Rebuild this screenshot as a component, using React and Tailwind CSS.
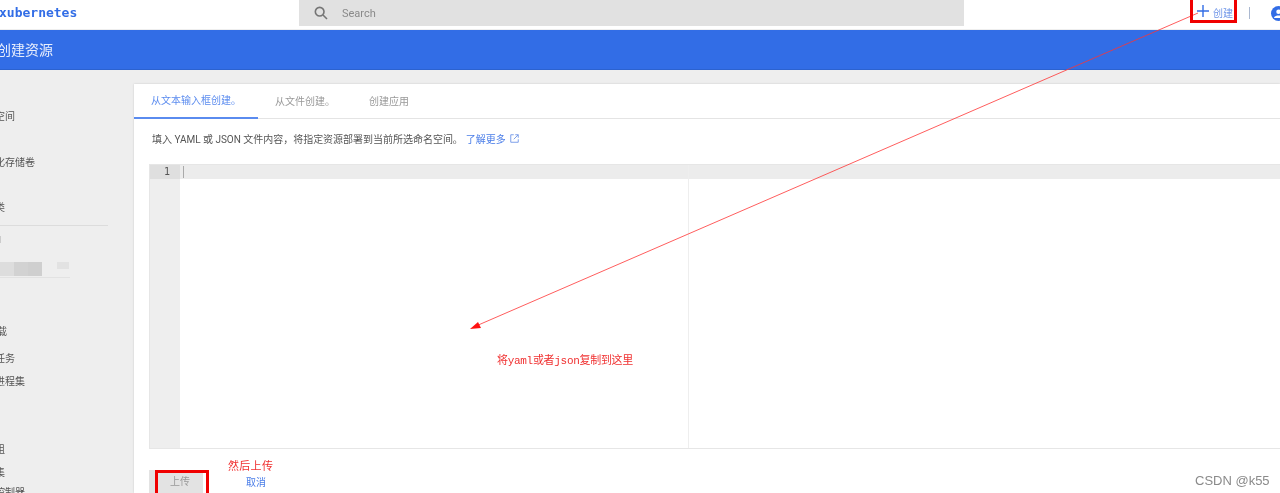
import React from 'react';

const cjk = "font-['Roboto','Noto_Sans_CJK_SC',sans-serif]";

const sideItems = [
    { text: '空间', h: 'h-[46px]', ml: '-ml-[5px]' },
    { text: '化存储卷', h: 'h-[45px]', ml: '-ml-[5px]' },
    { text: '类', h: 'h-[24px]', ml: '-ml-[5px]' },
];

const lowerItems = [
    { text: '载', h: 'h-[27px]', ml: '-ml-[3px]' },
    { text: '任务', h: 'h-[23px]', ml: '-ml-[5px]' },
    { text: '进程集', h: 'h-[68px]', ml: '-ml-[5px]' },
    { text: '组', h: 'h-[23px]', ml: '-ml-[5px]' },
    { text: '集', h: 'h-[20px]', ml: '-ml-[5px]' },
    { text: '控制器', h: 'h-[20px]', ml: '-ml-[5px]' },
];

const SideRow = ({ item }) => (
    <div className={`${item.h} flex items-start`}>
        <span className={`${item.ml} text-[10px] leading-[14px] text-[#555] whitespace-nowrap`}>{item.text}</span>
    </div>
);

const Annotations = () => (
    <svg className="absolute left-0 top-0 pointer-events-none" width="1280" height="493">
        <line x1="1198" y1="13" x2="476" y2="326" stroke="#f33" strokeWidth="0.8" />
        <polygon points="470,329 478,322 481,328" fill="#f11" />
    </svg>
);

export default function App() {
    return (
        <div className={`relative h-[493px] w-[1280px] overflow-hidden flex flex-col bg-[#eeeeee] blur-[0.35px] ${cjk}`}>
            <div className="h-[29px] bg-white flex items-start shrink-0">
                <div className="w-[299px] h-[26px] flex items-center overflow-hidden">
                    <span className="-ml-[1px] text-[13px] font-bold text-[#326de6] font-['DejaVu_Sans_Mono',monospace]">xubernetes</span>
                </div>
                <div className="w-[665px] h-[26px] bg-[#e1e1e1] flex items-center pl-[14px]">
                    <svg width="16" height="16" viewBox="0 0 24 24" fill="none" stroke="#757575" strokeWidth="2.4">
                        <circle cx="10" cy="10" r="6.5" />
                        <path d="M15 15l6 6" />
                    </svg>
                    <span className="ml-[13px] mt-[2px] text-[11px] text-[#8a8a8a]">Search</span>
                </div>
                <div className="flex-1 h-[26px] flex items-center justify-end">
                    <svg width="12" height="12" viewBox="0 0 12 12" className="-mt-[5px]" stroke="#326de6" strokeWidth="1.4">
                        <path d="M6 0v12M0 6h12" />
                    </svg>
                    <span className="ml-[4px] text-[10px] text-[#6f95e8]">创建</span>
                    <div className="ml-[16px] w-px h-[12px] bg-[#aab8d0]" />
                    <svg width="15" height="15" viewBox="0 0 24 24" className="ml-[21px] -mr-[6px] shrink-0">
                        <circle cx="12" cy="12" r="12" fill="#326de6" />
                        <circle cx="12" cy="9" r="3.6" fill="#fff" />
                        <path d="M5 18c2-4 12-4 14 0v1H5z" fill="#fff" />
                    </svg>
                </div>
            </div>
            <div className="h-[40px] mt-px bg-[#326de6] border-b border-[#2c62cf] flex items-center shrink-0 overflow-hidden">
                <span className="-ml-[3px] mt-[2px] text-[14px] text-[#e8eefc]">创建资源</span>
            </div>

            <div className="flex-1 flex min-h-0">
                <div className="w-[134px] shrink-0 pt-[40px] overflow-hidden">
                    {sideItems.map(item => <SideRow key={item.text} item={item} />)}
                    <div className="w-[108px] h-px bg-[#dcdcdc]" />
                    <div className="h-[13px] pt-[10px]">
                        <div className="w-px h-[7px] bg-[#ccc]" />
                    </div>
                    <div className="h-[86px] pt-[23px]">
                        <div className="flex gap-[15px] items-start">
                            <div className="flex">
                                <div className="w-[14px] h-[14px] bg-[#dddddd]" />
                                <div className="w-[14px] h-[14px] bg-[#d2d2d2]" />
                                <div className="w-[14px] h-[14px] bg-[#cfcfcf]" />
                            </div>
                            <div className="w-[12px] h-[7px] bg-[#e2e2e2]" />
                        </div>
                        <div className="mt-[1px] w-[70px] h-px bg-[#e2e2e2]" />
                    </div>
                    {lowerItems.map(item => <SideRow key={item.text} item={item} />)}
                </div>

                <div className="flex-1 mt-[14px] bg-white shadow-[0_0_2px_rgba(0,0,0,0.15)] min-w-0">
                    <div className="h-[35px] border-b border-[#e4e4e4] flex text-[10px] shrink-0">
                        <div className="w-[124px] h-[35px] border-b-2 border-[#5a8bef] text-[#5a8bef] flex items-center justify-center">从文本输入框创建。</div>
                        <div className="ml-[17px] h-[34px] flex items-center text-[#999]">从文件创建。</div>
                        <div className="ml-[34px] h-[34px] flex items-center text-[#999]">创建应用</div>
                    </div>
                    <div className="h-[45px] pl-[18px] flex items-center text-[10px] text-[#555] pb-[4px]">
                        <span className="tracking-[-0.02px]">填入 YAML 或 JSON 文件内容，将指定资源部署到当前所选命名空间。</span>
                        <span className="ml-[3px] text-[#4a7de8]">了解更多</span>
                        <svg width="9" height="9" viewBox="0 0 12 12" fill="none" stroke="#6f95e8" strokeWidth="1.2" className="ml-[4px] -mt-[2px]">
                            <path d="M5 1H1v10h10V7M7 1h4v4M11 1L5 7" />
                        </svg>
                    </div>
                    <div className="ml-[15px] h-[285px] border border-[#e6e6e6] border-r-0 flex">
                        <div className="w-[30px] bg-[#eeeeee] shrink-0">
                            <div className="h-[14px] bg-[#dfdfdf] text-right pr-[10px] text-[10px] leading-[14px] text-[#555] font-['DejaVu_Sans_Mono',monospace]">1</div>
                        </div>
                        <div className="flex-1 relative">
                            <div className="h-[14px] bg-[#ececec] flex items-center pl-[3px]">
                                <div className="w-px h-[12px] bg-[#aaa]" />
                            </div>
                            <div className="absolute top-0 bottom-0 left-[508px] w-px bg-[#eeeeee]" />
                        </div>
                    </div>
                    <div className="ml-[15px] mt-[21px] flex items-start">
                        <div className="w-[54px] h-[30px] bg-[#e3e3e3] pt-[4px] text-center text-[10px] text-[#999] pl-[8px]">上传</div>
                        <div className="ml-[43px] mt-[5px] text-[10px] text-[#4a7de8] whitespace-nowrap">取消</div>
                    </div>
                </div>
            </div>

            <Annotations />
            <div className="absolute left-[1190px] top-[-3px] w-[47px] h-[26px] border-[3px] border-[#f00000]" />
            <div className="absolute left-[155px] top-[470px] w-[54px] h-[26px] border-[3px] border-[#f00000]" />
            <div className="absolute left-[497px] top-[354px] text-[11px] leading-[14px] tracking-[-0.3px] text-[#f03030] font-['Liberation_Mono','Noto_Sans_CJK_SC',monospace]">将yaml或者json复制到这里</div>
            <div className="absolute left-[228px] top-[459px] text-[11px] leading-[14px] tracking-[0.3px] text-[#f03030] font-['Liberation_Serif','Noto_Sans_CJK_SC',serif]">然后上传</div>
            <div className="absolute left-[1195px] top-[473px] text-[13px] leading-[16px] text-[#8a8a8a] font-['Liberation_Sans',sans-serif]">CSDN @k55</div>
        </div>
    );
}
